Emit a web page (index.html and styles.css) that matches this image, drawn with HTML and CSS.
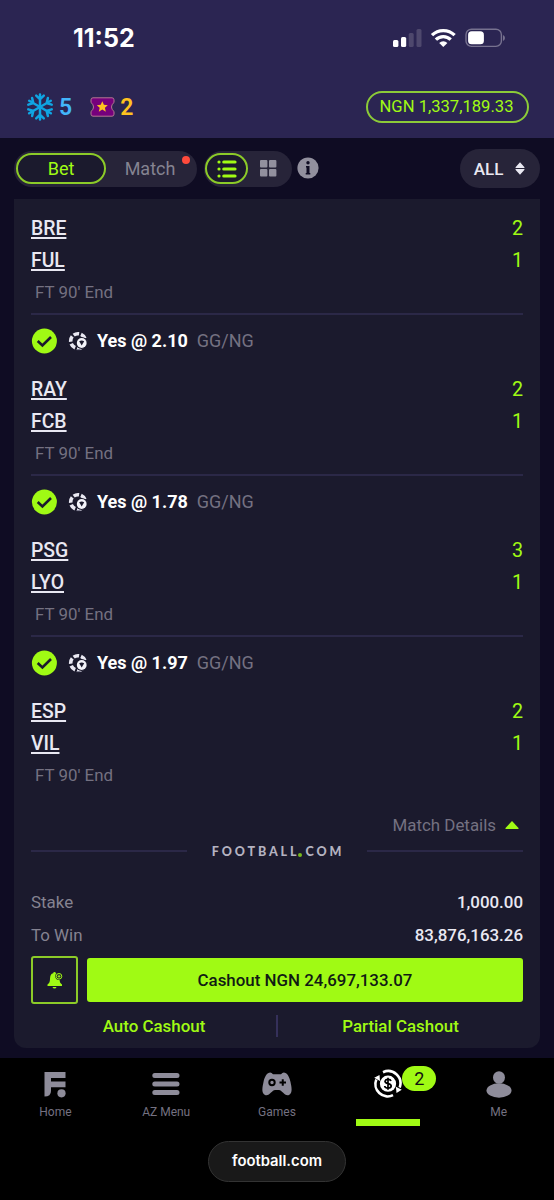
FILE: index.html
```
<!DOCTYPE html>
<html lang="en">
<head>
<meta charset="utf-8">
<title>Football.com</title>
<link rel="stylesheet" href="styles.css">
</head>
<body>
<svg class="defs" width="0" height="0">
  <symbol id="check" viewBox="0 0 26 26"><circle cx="13.4" cy="13" r="12.5" fill="#a0fa14"/><path d="M6.700 13l4.700 4.500 8.600-8.500" fill="none" stroke="#1b1a2d" stroke-width="2.600"/></symbol>
  <symbol id="ball" viewBox="0 0 20 20"><circle cx="10" cy="10" r="7.300" fill="none" stroke="#e9e8f2" stroke-width="3.600" stroke-dasharray="5.700 1.950" stroke-dashoffset="1"/><circle cx="13.700" cy="12" r="6" fill="#1b1a2d"/><circle cx="13.700" cy="12" r="4.900" fill="#f4f4fa"/><path d="M11.200 10.300q2.500-1.500 5 0L13.700 14.500z" fill="#1b1a2d"/><path d="M8.500 18.600h4" stroke="#77758a"/></symbol>
</svg>
<header class="top">
  <div class="status">
    <span class="time">11:52</span>
    <svg class="signals" width="114" height="20" viewBox="0 0 114 20">
      <g fill="#fff"><rect x="1" y="12" width="5.400" height="7" rx="1.500"/><rect x="9" y="9" width="5.200" height="10" rx="1.500"/></g>
      <g fill="#4e486d"><rect x="16.700" y="5" width="5" height="14" rx="1.500"/><rect x="24.500" y="1" width="5" height="18" rx="1.500"/></g>
      <g fill="none" stroke="#fff" stroke-width="3.300"><path d="M40 7.200a16 16 0 0 1 22.600 0"/><path d="M43.900 11.700a10.400 10.400 0 0 1 14.800 0"/></g>
      <path d="M47.200 14.900a5.800 5.800 0 0 1 8.200 0L51.300 19z" fill="#fff"/>
      <rect x="74" y="1.200" width="35.400" height="17.200" rx="5.500" fill="none" stroke="#77728f" stroke-width="1.400"/>
      <rect x="76.100" y="3.300" width="15.800" height="13" rx="3.600" fill="#fff"/><path d="M111 7v6q2-.8 2-3t-2-3" fill="#77728f"/>
    </svg>
  </div>
  <div class="account">
    <svg width="26" height="28" viewBox="-13 -14 26 28">
      <g fill="none" stroke="#0fa5e3" stroke-width="2.500" stroke-linecap="round">
        <g id="axis"><path d="M0-12.500v25M-3.800-11.300l3.800 3.600 3.800-3.600M-3.800 11.300l3.800-3.600 3.800 3.600"/></g>
        <use href="#axis" transform="rotate(60)"/><use href="#axis" transform="rotate(120)"/>
      </g>
    </svg>
    <b class="frozen">5</b>
    <svg class="ticket" width="25" height="20" viewBox="0 0 25 20"><path d="M3 .8h19q2 0 2 2v2.800q-2.500 1.500-2.500 4.400t2.500 4.400v2.800q0 2-2 2H3q-2 0-2-2v-2.800q2.500-1.500 2.500-4.400T1 5.600V2.800q0-2 2-2z" fill="#76007c" stroke="#b37892"/><path d="M12.300 4.200l1.600 3.600 3.900.4-2.900 2.600.9 3.900-3.500-2.100-3.500 2.100.9-3.900-2.900-2.600 3.900-.4z" fill="#ffc220"/></svg>
    <b class="gifts">2</b>
    <span class="balance">NGN 1,337,189.33</span>
  </div>
</header>
<main>
  <div class="filters">
    <div class="switch"><span class="option active">Bet</span><span class="option">Match</span><i class="dot"></i></div>
    <div class="views">
      <span class="view active"><svg width="20" height="18" viewBox="0 0 20 18"><g stroke="#a0fa14" stroke-width="3.200" stroke-linecap="round"><path d="M2 2h.01M2 9h.01M2 16h.01M6.800 2h11.200M6.800 9h11.200M6.800 16h11.200"/></g></svg></span>
      <svg width="17" height="17" viewBox="0 0 17 17" fill="#92909e"><rect width="7.400" height="7.400" rx="1"/><rect x="9" width="7.400" height="7.400" rx="1"/><rect y="9" width="7.400" height="7.400" rx="1"/><rect x="9" y="9" width="7.400" height="7.400" rx="1"/></svg>
    </div>
    <svg class="info" width="22" height="22" viewBox="0 0 22 22"><circle cx="11" cy="11" r="10.600" fill="#92909e"/><circle cx="11" cy="5.700" r="1.700" fill="#0f0c23"/><path d="M9 9h3.500v7h.8v1.500H8.700V16h.8v-5.500H9z" fill="#0f0c23"/></svg>
    <div class="all">ALL<svg width="10" height="13" viewBox="0 0 10 13" fill="#e9e8f2"><path d="M5 .3l4.500 4.900q.3.800-.5.800H1Q.2 6 .5 5.200zM5 12.700L.5 7.800Q.2 7 1 7h8q.8 0 .5.800z"/></svg></div>
  </div>
  <section class="card">
    <article class="match">
      <div class="team"><u>BRE</u><span>2</span></div><div class="team"><u>FUL</u><span>1</span></div><p class="state">FT 90' End</p>
    </article>
    <article class="match">
      <div class="pick"><svg width="26" height="26"><use href="#check"/></svg><svg width="20" height="20"><use href="#ball"/></svg><b>Yes @ 2.10</b><span>GG/NG</span></div>
      <div class="team"><u>RAY</u><span>2</span></div><div class="team"><u>FCB</u><span>1</span></div><p class="state">FT 90' End</p>
    </article>
    <article class="match">
      <div class="pick"><svg width="26" height="26"><use href="#check"/></svg><svg width="20" height="20"><use href="#ball"/></svg><b>Yes @ 1.78</b><span>GG/NG</span></div>
      <div class="team"><u>PSG</u><span>3</span></div><div class="team"><u>LYO</u><span>1</span></div><p class="state">FT 90' End</p>
    </article>
    <article class="match">
      <div class="pick"><svg width="26" height="26"><use href="#check"/></svg><svg width="20" height="20"><use href="#ball"/></svg><b>Yes @ 1.97</b><span>GG/NG</span></div>
      <div class="team"><u>ESP</u><span>2</span></div><div class="team"><u>VIL</u><span>1</span></div><p class="state">FT 90' End</p>
    </article>
    <div class="details">Match Details<svg width="14" height="8" viewBox="0 0 14 8"><path d="M7 0l6.500 7v1H.5V7z" fill="#a0fa14"/></svg></div>
    <div class="brand"><span class="brand-name">FOOTBALL<i></i>COM</span></div>
    <div class="amount"><span>Stake</span><strong>1,000.00</strong></div>
    <div class="amount"><span>To Win</span><strong>83,876,163.26</strong></div>
    <div class="actions">
      <span class="alert"><svg width="16" height="18" viewBox="0 0 16 18"><path d="M7.500 1q1.200 0 1.300 1.300C11.800 3 12.500 5 12.500 8q0 4 2.500 5.500V15H.5v-1.500Q3 12 3 8q0-5 3.200-5.700Q6.300 1 7.500 1zM5.500 16h4q-.5 1.500-2 1.500t-2-1.500" fill="#a0fa14"/><circle cx="12" cy="5.300" r="3.700" fill="#1b1a2d"/><circle cx="12" cy="5.300" r="2.800" fill="none" stroke="#a0fa14"/><path d="M10.500 5.300h3M12 3.800v3" stroke="#a0fa14"/></svg></span>
      <span class="cashout">Cashout NGN 24,697,133.07</span>
    </div>
    <div class="links"><span>Auto Cashout</span><span>Partial Cashout</span></div>
  </section>
</main>
<nav class="tabs">
  <div class="tab"><svg width="30" height="30" viewBox="0 0 30 30" fill="#8e8c9a"><path d="M4.500 3h21v6H11v3.500h14.500v5.800H11V22q0 5.500-6.500 5.500z"/><circle cx="21.500" cy="24.300" r="4.100"/></svg><span>Home</span></div>
  <div class="tab"><svg width="30" height="30" viewBox="0 0 30 30"><path d="M3.800 6.500h22.200M3.800 15h22.200M3.800 23.500h22.200" stroke="#8e8c9a" stroke-width="5" stroke-linecap="round"/></svg><span>AZ Menu</span></div>
  <div class="tab"><svg width="32" height="30" viewBox="0 0 32 30"><path d="M7.500 4Q10 2.800 12 5.200h8Q22 2.800 24.500 4c2.500 1 4.200 5 5 9 1 5 2.500 11-1.500 13-4.500 1.500-7-5-10-5h-4c-3 0-5.500 6.500-10 5-4-2-2.500-8-1.500-13 .8-4 2.500-8 5-9z" fill="#8e8c9a"/><circle cx="11" cy="13.500" r="2.700" fill="none" stroke="#000" stroke-width="2"/><path d="M18.500 13.500h6.500M21.750 10.250v6.500" stroke="#000" stroke-width="2"/></svg><span>Games</span></div>
  <div class="tab current"><svg width="30" height="30" viewBox="0 0 30 30"><g fill="none" stroke="#fff" stroke-width="2.600"><path d="M10 3.200A12.300 12.300 0 0 1 26.700 18.500"/><path d="M20 26.200A12.300 12.300 0 0 1 3.300 10.500"/></g><path d="M1.200 8.700L6.500 6l.5 6zM28.800 20.700L23.500 24l-.6-6.300z" fill="#fff"/><circle cx="15" cy="14.700" r="8.100" fill="#fff"/><path d="M18 12.100q-.5-1.700-3-1.700t-3 1.800c0 3.200 6.200 1.600 6.200 4.800q0 2-3.200 2t-3.300-2M15 8.800v12" fill="none" stroke="#000" stroke-width="1.700"/></svg><em class="count">2</em></div>
  <div class="tab"><svg width="30" height="30" viewBox="0 0 30 30" fill="#8e8c9a"><ellipse cx="15" cy="8.500" rx="6" ry="6.300"/><ellipse cx="15" cy="21.500" rx="12.500" ry="7.200"/></svg><span>Me</span></div>
</nav>
<footer class="browser"><span class="address">football.com</span></footer>
</body>
</html>
```
FILE: styles.css
```
* { box-sizing: border-box; }
body { margin: 0; width: 554px; height: 1200px; overflow: hidden; background: #0f0c23; color: #e9e8f2; font-family: Roboto, sans-serif; font-size: 16.9px; }
svg { display: block; flex: none; }
.defs { position: absolute; }
.top { height: 138px; background: #2b2552; }
.status { height: 76px; padding: 0 48px 0 73px; display: flex; align-items: center; justify-content: space-between; }
.time { font: 700 25px/28px Inter, sans-serif; color: #fff; }
.account { height: 61px; padding: 0 25px 0 27px; display: flex; align-items: center; }
.account b { font-size: 23px; line-height: 27px; font-weight: 600; padding-top: 1px; }
.frozen { color: #42b5fa; margin-left: 6px; }
.ticket { margin-left: 18px; }
.gifts { color: #ffc220; margin-left: 5px; }
.balance { margin-left: auto; width: 163px; height: 32px; border: 2px solid #8ccb38; border-radius: 16px; padding-right: 2px; line-height: 28px; text-align: center; color: #a0fa14; font-size: 16.6px; }
.filters { height: 61px; padding: 0 14px; display: flex; align-items: center; font-size: 18px; }
.switch { position: relative; width: 183px; height: 36px; border-radius: 18px; background: #272439; display: flex; align-items: center; padding-left: 2px; }
.option { width: 90px; line-height: 27px; text-align: center; color: #858391; }
.option.active { height: 31px; border: 2px solid #8ccb28; border-radius: 16px; color: #a0fa14; background: #1b1a2d; }
.option + .option { width: 88px; }
.dot { position: absolute; right: 7px; top: 5px; width: 8px; height: 8px; border-radius: 50%; background: #ff4a3c; }
.views { width: 88px; height: 36px; margin-left: 7px; border-radius: 18px; background: #272439; display: flex; align-items: center; gap: 12px; padding-left: 1px; }
.view { width: 43px; height: 31px; border: 2px solid #8ccb28; border-radius: 16px; display: flex; align-items: center; justify-content: center; background: #1b1a2d; }
.info { margin-left: 5px; margin-top: -1px; }
.all { margin-left: auto; width: 80px; height: 39px; border-radius: 20px; background: #272439; display: flex; align-items: center; justify-content: center; gap: 12px; font-size: 17px; line-height: 20px; font-weight: 500; padding-right: 1px; }
.card { height: 849px; margin: 0 14px; padding: 13px 17px 0; background: #1b1a2d; border-radius: 0 0 12px 12px; }
.match + .match { margin-top: 5px; border-top: 2px solid #2b2847; }
.pick { height: 58px; padding-bottom: 6px; display: flex; align-items: center; font-size: 18px; line-height: 22px; }
.pick svg + svg { margin-left: 11px; }
.pick b { margin-left: 9px; font-weight: 700; color: #fff; }
.pick span { margin-left: 9px; color: #747181; }
.team { height: 32px; padding-top: 1px; display: flex; align-items: center; justify-content: space-between; font-size: 19.7px; line-height: 25px; }
.team u { font-weight: 500; font-size: 19.4px; text-decoration-thickness: 2px; text-underline-offset: 2px; }
.team span { color: #a0fa14; }
.state { height: 32px; margin: 0; padding-left: 4px; line-height: 33px; color: #747181; }
.details { height: 29px; margin-top: 19px; padding-right: 4px; display: flex; align-items: center; justify-content: flex-end; gap: 9px; color: #747181; }
.brand { height: 22px; margin-top: 1px; display: flex; align-items: center; gap: 25px; }
.brand::before, .brand::after { content: ""; flex: 1; height: 2px; background: #2b2847; }
.brand-name { margin-right: -2px; padding-top: 2px; display: flex; align-items: center; font: 900 12.5px/20px Lato, sans-serif; letter-spacing: 2.9px; color: #b4b2c0; }
.brand-name i { width: 4px; height: 4px; margin: 6px 3px 0 -1px; border-radius: 50%; background: #76b91c; }
.amount { height: 33px; display: flex; align-items: center; justify-content: space-between; color: #858391; line-height: 22px; padding-bottom: 1px; }
.brand + .amount { margin-top: 24px; }
.amount strong { color: #e9e8f2; font-weight: 500; }
.actions { height: 48px; margin-top: 4px; display: flex; align-items: center; gap: 9px; }
.alert { width: 47px; height: 48px; border: 2px solid #8ccb28; border-radius: 3px; display: flex; align-items: center; justify-content: center; }
.cashout { flex: 1; height: 44px; border-radius: 3px; background: #a0fa14; color: #111b14; text-align: center; line-height: 44px; font-weight: 500; }
.links { height: 44px; display: grid; grid-template-columns: 1fr 1fr; align-items: center; text-align: center; color: #a0fa14; font-weight: 500; }
.links span { line-height: 22px; }
.links span + span { margin-left: -1px; border-left: 2px solid #35305a; }
.tabs { height: 76px; margin-top: 10px; background: #000; display: grid; grid-template-columns: repeat(5, 1fr); }
.tab { position: relative; padding-top: 11px; display: flex; flex-direction: column; align-items: center; color: #747181; font-size: 12px; }
.tab span { margin-top: 5px; line-height: 16px; }
.current::after { content: ""; position: absolute; left: 50%; bottom: 8px; width: 64px; height: 7px; margin-left: -32px; background: #a0fa14; }
.count { position: absolute; left: 70px; top: 8px; width: 34px; height: 25px; border-radius: 13px; background: #a0fa14; color: #111; text-align: center; font: 400 18px/25px Roboto, sans-serif; }
.browser { height: 66px; background: #000; display: flex; justify-content: center; padding-top: 7px; }
.address { width: 138px; height: 41px; border: 1px solid #333; border-radius: 21px; background: #191919; color: #fff; text-align: center; font: 600 14.8px/39px Inter, sans-serif; }
```
